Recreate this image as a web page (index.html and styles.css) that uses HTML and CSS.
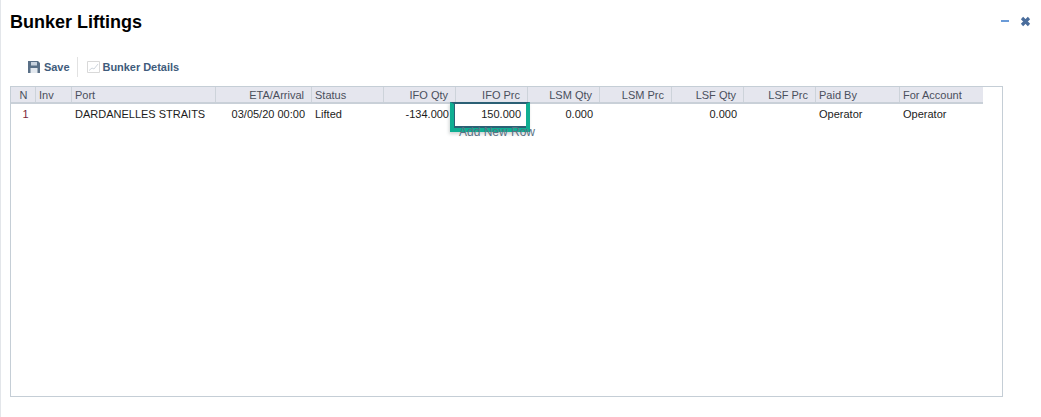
FILE: index.html
```html
<!DOCTYPE html>
<html lang="en">
<head>
  <meta charset="UTF-8">
  <title>Bunker Liftings</title>
  <link rel="stylesheet" href="styles.css">
</head>
<body>

  <div class="window">
    <div class="title-bar">
      <h2>Bunker Liftings</h2>
      <div class="window-icons">
        <span class="min-icon"></span>
        <svg class="close-icon" width="11" height="11" viewBox="0 0 11 11">
          <path d="M2 2L9 9M9 2L2 9" stroke="#4a6d9c" stroke-width="3.2"/>
        </svg>
      </div>
    </div>

    <div class="toolbar">
      <a class="tool">
        <svg width="12" height="12" viewBox="0 0 12 12">
          <path d="M0 0H10L12 2V12H0Z" fill="#5a7087"/>
          <rect x="3" y="1" width="6" height="3.5" fill="#c9d3de"/>
          <rect x="2.5" y="7" width="7" height="5" fill="#e4e9ef"/>
        </svg>
        Save
      </a>
      <span class="tool-sep"></span>
      <a class="tool">
        <svg width="13" height="12" viewBox="0 0 13 12">
          <path d="M0.5 0.5V11.5H12.5V0.5Z" fill="none" stroke="#d9d9d9"/>
          <path d="M2 9.5L5 7L7 8L11 3" fill="none" stroke="#cfd6de"/>
        </svg>
        Bunker Details
      </a>
    </div>

    <div class="grid-box">
      <div class="row head">
        <div class="cell row-head">N</div>
        <div class="cell">Inv</div>
        <div class="cell">Port</div>
        <div class="cell num">ETA/Arrival</div>
        <div class="cell">Status</div>
        <div class="cell num">IFO Qty</div>
        <div class="cell num">IFO Prc</div>
        <div class="cell num">LSM Qty</div>
        <div class="cell num">LSM Prc</div>
        <div class="cell num">LSF Qty</div>
        <div class="cell num">LSF Prc</div>
        <div class="cell">Paid By</div>
        <div class="cell">For Account</div>
      </div>
      <div class="row">
        <div class="cell row-no">1</div>
        <div class="cell"></div>
        <div class="cell">DARDANELLES STRAITS</div>
        <div class="cell num">03/05/20 00:00</div>
        <div class="cell">Lifted</div>
        <div class="cell num">-134.000</div>
        <div class="cell num selected">150.000</div>
        <div class="cell num">0.000</div>
        <div class="cell num"></div>
        <div class="cell num">0.000</div>
        <div class="cell num"></div>
        <div class="cell">Operator</div>
        <div class="cell">Operator</div>
      </div>
      <div class="add-row">Add New Row</div>
    </div>
  </div>

</body>
</html>
```

FILE: styles.css
```css
* {
  box-sizing: border-box;
}

html, body {
  height: 100%;
}

body {
  font-family: 'Liberation Sans', Arial, sans-serif;
  margin: 0;
  padding: 0;
  background-color: white;
  overflow: hidden;
}

.window {
  height: 417px;
  padding: 0 38px 0 9px;
  border-left: 1px solid #e3e6ea;
}

.title-bar {
  display: flex;
  justify-content: space-between;
  height: 56px;
  margin-right: -38px;
  padding-top: 12px;
}

h2 {
  margin: 0;
  font-size: 18px;
  line-height: 20px;
  font-weight: bold;
  color: black;
}

.window-icons {
  display: flex;
  align-items: center;
  gap: 11px;
  height: 18px;
  padding-right: 10px;
}

.min-icon {
  width: 8px;
  height: 2px;
  margin-top: -1px;
  background: #6a9bd8;
}

.close-icon {
  display: block;
}

.toolbar {
  display: flex;
  align-items: center;
  height: 22px;
  padding-left: 18px;
}

.tool {
  display: flex;
  align-items: center;
  gap: 4px;
  font-size: 11px;
  font-weight: bold;
  letter-spacing: -0.04px;
  color: #3f5c7c;
}

.tool-sep {
  width: 1px;
  height: 20px;
  margin: 0 9px 0 7px;
  background: #e2e2e2;
}

.tool-sep + .tool {
  gap: 3px;
}

.grid-box {
  width: 993px;
  height: 311px;
  margin-top: 8px;
  border: 1px solid #c5ced6;
  font-size: 11px;
}

.row {
  display: grid;
  grid-template-columns: 25px 36px 144px 96px 72px 72px 72px 72px 72px 72px 72px 84px 83px;
  width: 972px;
  height: 21px;
  color: #1c1c1c;
}

.row .cell {
  padding: 0 7px 0 3px;
  line-height: 21px;
  white-space: nowrap;
}

.row .num {
  text-align: right;
}

.row.head {
  height: 17px;
  background: #e5e6ee;
  border-bottom: 2px solid #c9d0d8;
  color: #4a4f5c;
}

.row.head .cell {
  line-height: 17px;
  height: 15px;
  border-right: 1px solid #cdd3da;
}

.row.head .cell:last-child {
  border-right: none;
}

.row.head .row-head {
  padding: 0 0 0 1px;
  text-align: center;
}

.row .row-no {
  padding: 0 0 0 4px;
  text-align: center;
  color: #7a1f3d;
}

.selected {
  position: relative;
  z-index: 1;
}

/* dark cell focus line with the thick green marker on top of it */
.selected::after {
  content: "";
  position: absolute;
  top: -2px;
  left: -6px;
  right: -2px;
  height: 24px;
  border-style: solid;
  border-color: #2b6075 #0fae92 #0fae92 #0fae92;
  border-width: 2px 4px 4px 4px;
  box-shadow: inset 1px 0 0 #2b6075, inset 0 -2px 0 #2b6075, -1px 2px 3px rgba(70, 90, 90, 0.25);
}

.add-row {
  position: relative;
  z-index: 2;
  margin: 0 0 0 448px;
  line-height: 14px;
  font-size: 12px;
  color: #5a7184;
}
```
